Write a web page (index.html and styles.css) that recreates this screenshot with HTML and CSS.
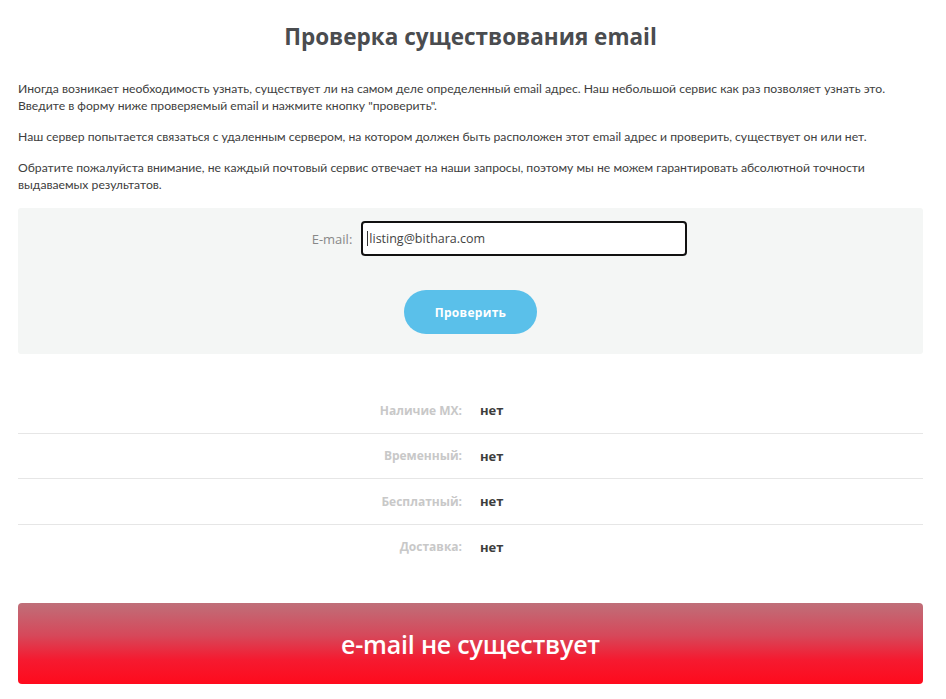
FILE: index.html
```html
<!DOCTYPE html>
<html lang="ru">
<head>
<meta charset="utf-8">
<link rel="stylesheet" href="styles.css">
</head>
<body>
<div class="page">
  <h1 class="title">Проверка существования email</h1>
  <p class="text">Иногда возникает необходимость узнать, существует ли на самом деле определенный email адрес. Наш небольшой сервис как раз позволяет узнать это.<br>Введите в форму ниже проверяемый email и нажмите кнопку "проверить".</p>
  <p class="text">Наш сервер попытается связаться с удаленным сервером, на котором должен быть расположен этот email адрес и проверить, существует он или нет.</p>
  <p class="text">Обратите пожалуйста внимание, не каждый почтовый сервис отвечает на наши запросы, поэтому мы не можем гарантировать абсолютной точности выдаваемых результатов.</p>
  <form class="form">
    <div class="field">
      <label class="label">E-mail:</label>
      <div class="input"><span class="caret"></span>listing@bithara.com</div>
    </div>
    <div class="btn-row"><span class="btn">Проверить</span></div>
  </form>
  <div class="results">
    <div class="row"><span class="key">Наличие MX:</span><span class="val">нет</span></div>
    <div class="row"><span class="key">Временный:</span><span class="val">нет</span></div>
    <div class="row"><span class="key">Бесплатный:</span><span class="val">нет</span></div>
    <div class="row"><span class="key">Доставка:</span><span class="val">нет</span></div>
  </div>
  <div class="verdict">e-mail не существует</div>
</div>
</body>
</html>
```
FILE: styles.css
```css
html, body { margin: 0; padding: 0; background: #fff; }
body { font-family: "Lato", "Open Sans", sans-serif; color: #444; }
.page { margin: 0 23px 0 18px; padding-top: 22px; }
.title {
  font-family: "Open Sans", sans-serif;
  font-weight: 700;
  font-size: 22.5px;
  line-height: 30px;
  color: #4a4c4f;
  text-align: center;
  margin: 0 0 28px;
}
.text {
  font-size: 12.2px;
  line-height: 17px;
  margin: 0 0 14px;
  color: #404040;
}
.form {
  background: #f4f6f5;
  border-radius: 3px;
  margin-top: 15px;
  padding: 13px 0 20px;
}
.field { display: flex; justify-content: center; align-items: center; gap: 9px; padding-left: 58px; }
.label { font-family: "Open Sans", sans-serif; font-size: 13px; color: #888; }
.input {
  width: 318px; height: 31px;
  border: 2px solid #111; border-radius: 4px; background: #fff;
  font-family: "Open Sans", sans-serif; font-size: 12.5px; color: #444;
  line-height: 31px; padding-left: 4px; box-sizing: content-box;
  display: flex; align-items: center;
}
.caret { width: 1px; height: 15px; background: #333; margin-right: 1px; }
.btn-row { display: flex; justify-content: center; margin-top: 34px; }
.btn {
  width: 133px; height: 44px; border-radius: 22px;
  background: #5ac0ea; color: #fff;
  font-family: "Open Sans", sans-serif; font-weight: 700; font-size: 12px;
  letter-spacing: 0.3px;
  display: flex; align-items: center; justify-content: center;
}
.results { margin-top: 34px; }
.row {
  display: grid; grid-template-columns: 444px 1fr; column-gap: 18px;
  height: 44.5px; align-items: center;
  border-bottom: 1px solid #e6e6e6;
  font-family: "Open Sans", sans-serif; font-weight: 700; font-size: 12px;
}
.row:last-child { border-bottom: none; }
.key { text-align: right; color: #c8c8c8; }
.val { color: #3d3d3d; font-size: 13px; }
.verdict {
  margin-top: 34px;
  height: 81px; border-radius: 4px;
  background: linear-gradient(to bottom, #bf6f79 0%, #d6485a 40%, #f51a30 70%, #ff0a1c 100%);
  color: #fff; font-family: "Open Sans", sans-serif; font-weight: 600; font-size: 25px;
  display: flex; align-items: center; justify-content: center;
  letter-spacing: -0.2px;
}
```
